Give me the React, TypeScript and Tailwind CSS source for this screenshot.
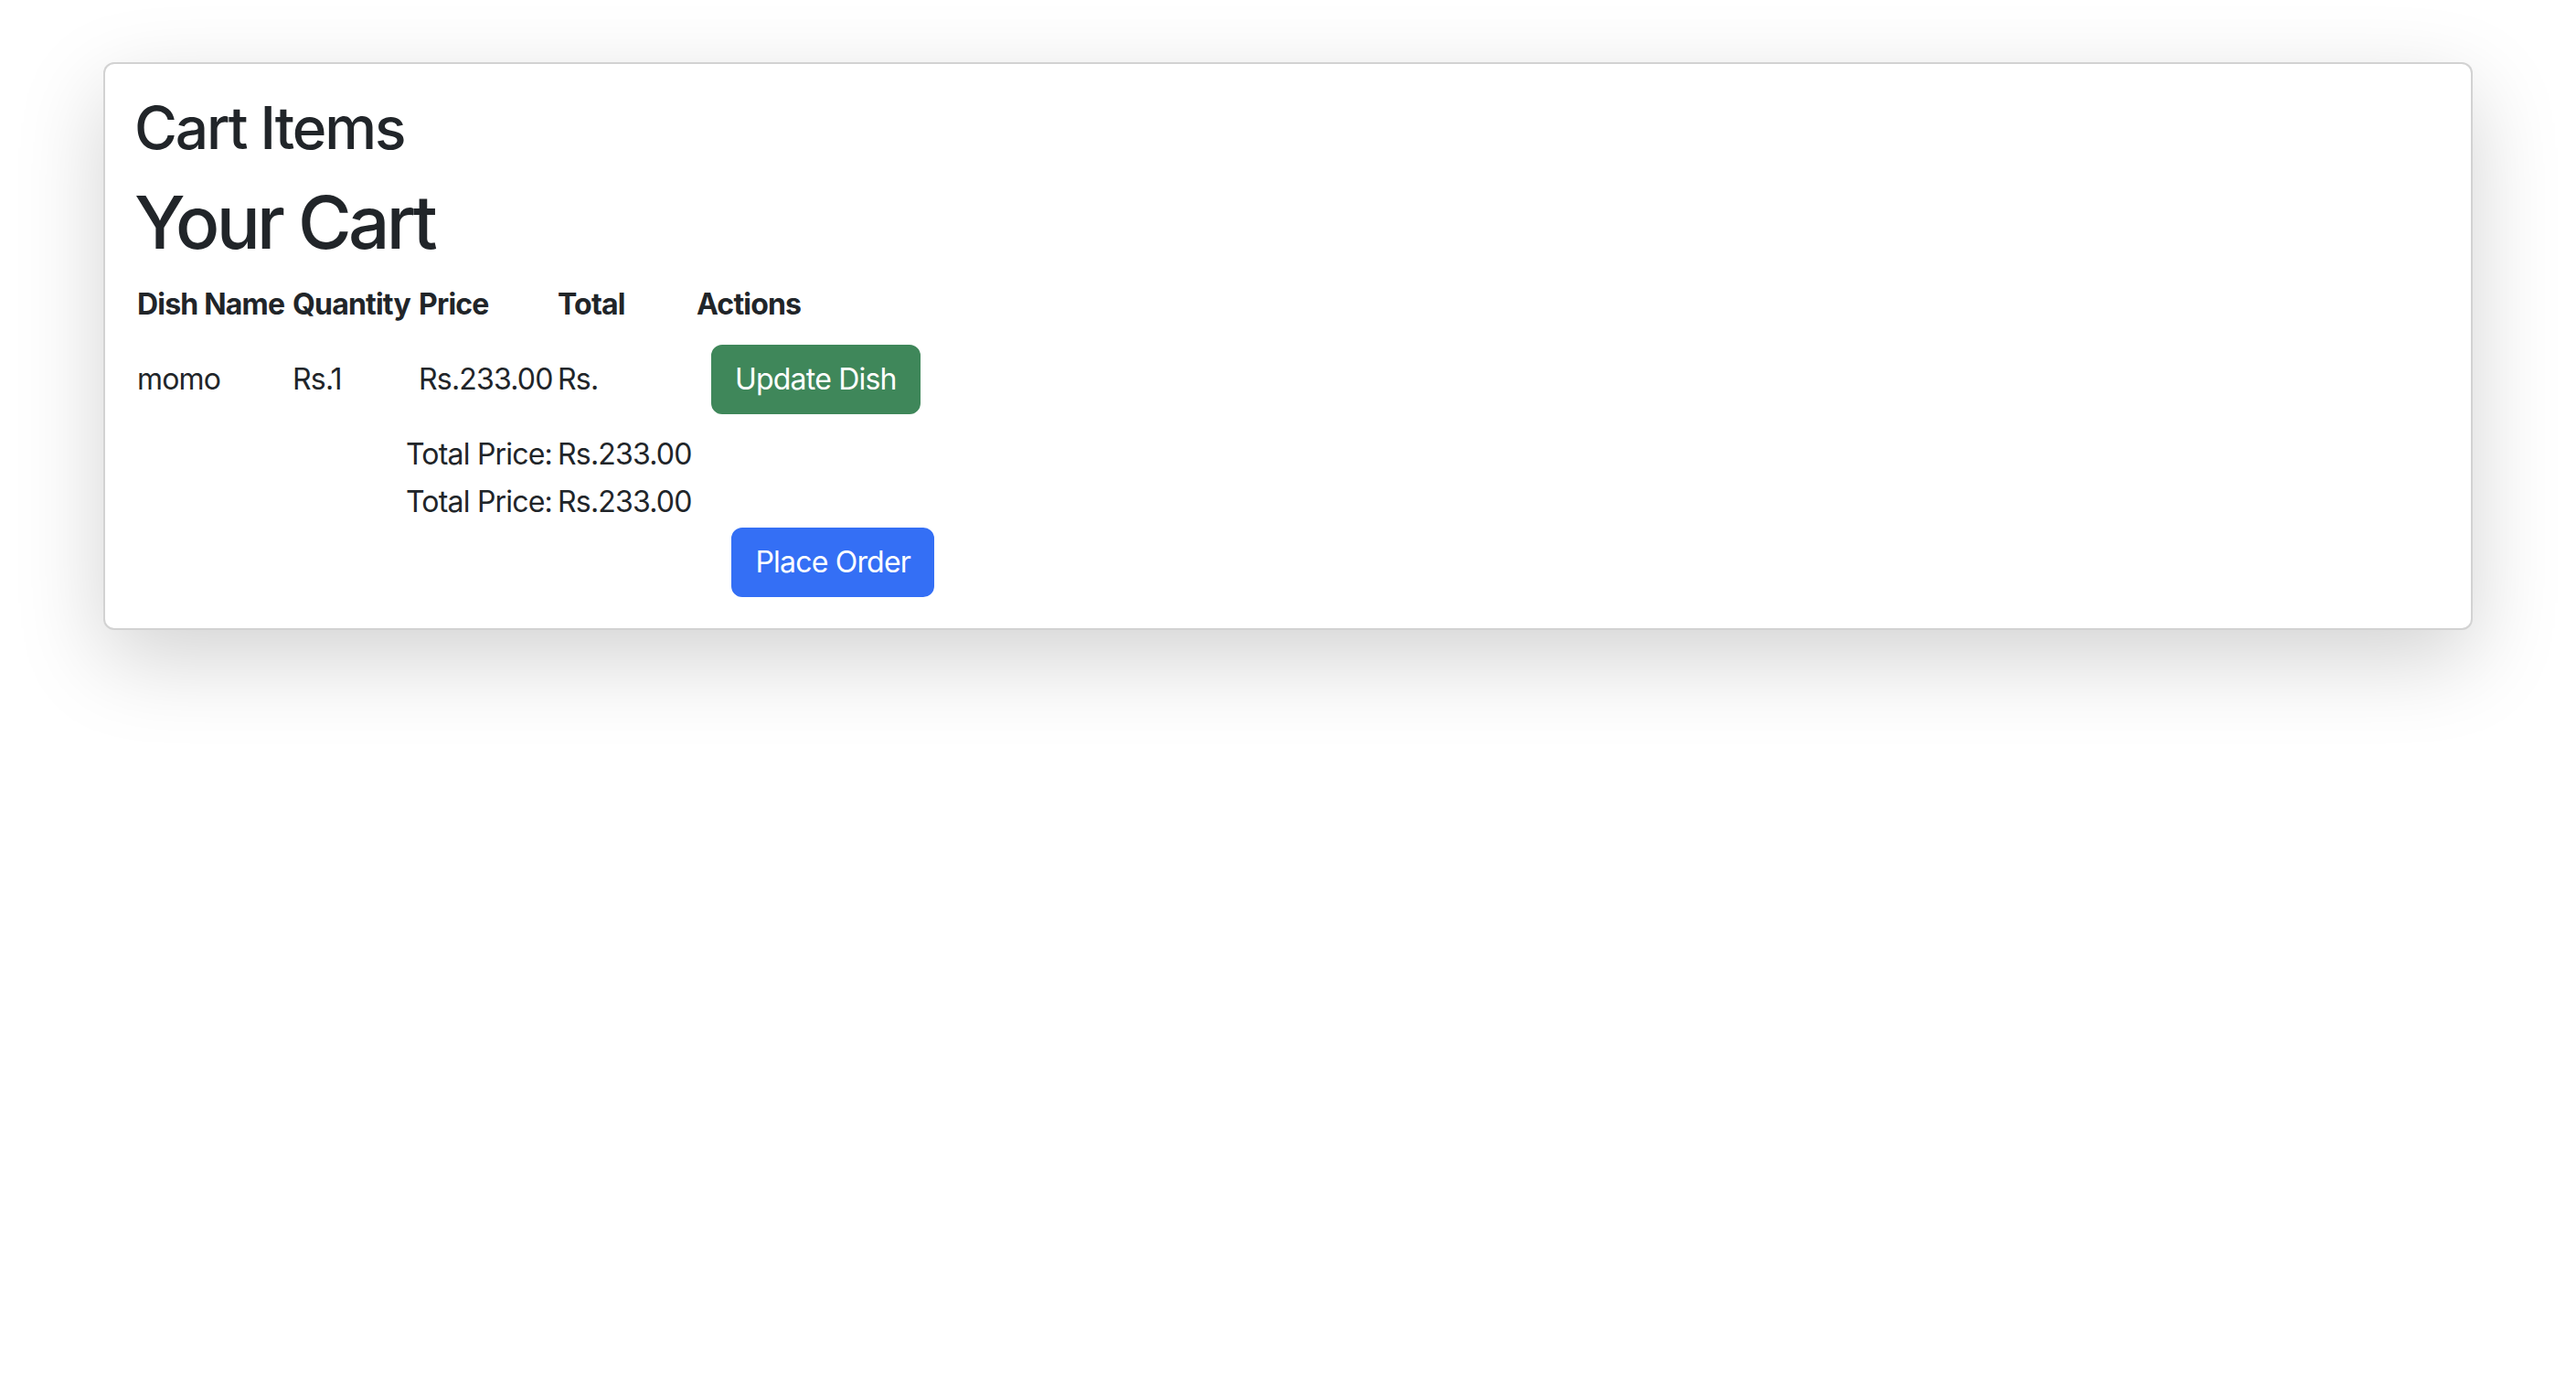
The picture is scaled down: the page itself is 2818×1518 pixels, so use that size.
import React from "react";

const items = [{ name: "momo", quantity: 1, price: 233 }];

const font = { fontFamily: "Inter, 'Noto Sans', sans-serif" };

export default function App() {
  const total = items.reduce((s, i) => s + i.price * i.quantity, 0);

  return (
    <div className="min-h-[1518px] bg-white text-[#212529]" style={font}>
      <div className="mx-[113px] pt-[68px]">
        <div className="rounded-[12px] border-2 border-[rgba(0,0,0,0.175)] bg-white p-[32px] shadow-[0_32px_96px_rgba(0,0,0,0.175)]">
          <h2 className="mb-[16px] text-[64px] font-medium leading-[1.2] tracking-[-0.033em]">Cart Items</h2>
          <h1 className="mb-[16px] text-[80px] font-medium leading-[1.2] tracking-[-0.046em]">Your Cart</h1>

          <table className="w-[878px] table-fixed border-collapse whitespace-nowrap text-[32px] leading-[1.5] tracking-[-0.025em]">
            <colgroup>
              <col className="w-[170px]" />
              <col className="w-[138px]" />
              <col className="w-[152px]" />
              <col className="w-[152px]" />
              <col className="w-[266px]" />
            </colgroup>
            <thead>
              <tr className="text-left">
                <th className="px-[3px] py-[2px] font-bold tracking-[-0.025em]">Dish Name</th>
                <th className="px-[3px] py-[2px] font-bold tracking-[-0.025em]">Quantity</th>
                <th className="px-[3px] py-[2px] font-bold tracking-[-0.025em]">Price</th>
                <th className="px-[3px] py-[2px] font-bold tracking-[-0.025em]">Total</th>
                <th className="px-[3px] py-[2px] font-bold tracking-[-0.025em]">Actions</th>
              </tr>
            </thead>
            <tbody>
              {items.map((item) => (
                <tr key={item.name}>
                  <td className="px-[3px] py-[2px]">{item.name}</td>
                  <td className="px-[3px] py-[2px]">Rs.{item.quantity}</td>
                  <td className="px-[3px] py-[2px]">Rs.{item.price.toFixed(2)}</td>
                  <td className="px-[3px] py-[2px]">Rs.</td>
                  <td className="px-[3px] py-[2px]">
                    <button className="m-[16px] rounded-[12px] border-2 border-[#3f875a] bg-[#3f875a] px-[24px] py-[12px] text-white">
                      Update Dish
                    </button>
                  </td>
                </tr>
              ))}
              <tr>
                <td colSpan={3} className="px-[3px] py-[2px] text-right">
                  Total Price:
                </td>
                <td className="px-[3px] py-[2px]">Rs.{total.toFixed(2)}</td>
                <td />
              </tr>
              <tr>
                <td colSpan={3} className="px-[3px] py-[2px] text-right">
                  Total Price:
                </td>
                <td className="px-[3px] py-[2px]">Rs.{total.toFixed(2)}</td>
                <td />
              </tr>
              <tr>
                <td colSpan={5} className="px-[3px] py-[2px] text-right">
                  <button className="rounded-[12px] border-2 border-[#346ff5] bg-[#346ff5] px-[24px] py-[12px] text-white">
                    Place Order
                  </button>
                </td>
              </tr>
            </tbody>
          </table>
        </div>
      </div>
    </div>
  );
}
